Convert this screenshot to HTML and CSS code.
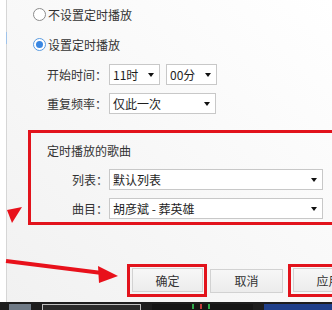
FILE: index.html
```html
<!DOCTYPE html>
<html lang="zh-CN">
<head>
    <meta charset="UTF-8">
    <title>定时播放设置</title>
    <link rel="stylesheet" href="styles.css">
</head>
<body>
    <div class="screen">
        <div class="dialog">
            <div class="side-mark"></div>

            <!-- Radio options -->
            <div class="radio-row">
                <span class="radio"></span>
                <span>不设置定时播放</span>
            </div>
            <div class="radio-row second">
                <span class="radio checked"></span>
                <span>设置定时播放</span>
            </div>

            <!-- Time settings -->
            <div class="field-row first">
                <span class="field-label">开始时间：</span>
                <div class="select short">11时<i class="caret"></i></div>
                <div class="select short">00分<i class="caret"></i></div>
            </div>
            <div class="field-row">
                <span class="field-label">重复频率：</span>
                <div class="select medium">仅此一次<i class="caret"></i></div>
            </div>

            <!-- Song box -->
            <div class="song-box">
                <div class="song-title">定时播放的歌曲</div>
                <div class="song-row">
                    <span class="song-label">列表：</span>
                    <div class="select wide">默认列表<i class="caret"></i></div>
                </div>
                <div class="song-row">
                    <span class="song-label">曲目：</span>
                    <div class="select wide">胡彦斌 - 葬英雄<i class="caret"></i></div>
                </div>
            </div>

            <!-- Buttons -->
            <div class="btn-row">
                <div class="mark-frame">
                    <button class="btn">确定</button>
                </div>
                <button class="btn cancel">取消</button>
                <div class="mark-frame apply">
                    <button class="btn">应用</button>
                </div>
            </div>
        </div>

        <div class="taskbar">
            <span class="task-icon"></span>
            <span class="task-item light"></span>
            <span class="task-item dots">
                <i class="dot green"></i><i class="dot red"></i><i class="dot green"></i>
            </span>
            <span class="task-item blue"></span>
        </div>

        <!-- Red annotation arrows -->
        <svg class="arrows" width="332" height="310" viewBox="0 0 332 310">
            <polygon points="7,210 22,207 12,223" fill="#e8111b"/>
            <line x1="6" y1="261" x2="102" y2="273" stroke="#e8111b" stroke-width="4"/>
            <polygon points="98,266 118,276 99,283" fill="#e8111b"/>
        </svg>
    </div>
</body>
</html>
```

FILE: styles.css
```css
body {
    margin: 0;
    padding: 0;
    background: #fff;
    font-family: "Noto Sans CJK SC", "Noto Sans", sans-serif;
    font-size: 12px;
    color: #333;
}

.screen {
    position: relative;
    width: 332px;
    height: 310px;
    overflow: hidden;
    background: #fff;
}

.dialog {
    position: relative;
    height: 302px;
    margin-left: 6px;
    border-left: 1px solid #d6d6d6;
    background: linear-gradient(to bottom left, #ffffff 0%, #f9f9f9 45%, #f1f1f1 100%);
    display: flex;
    flex-direction: column;
    align-items: flex-start;
}

.side-mark {
    position: absolute;
    left: -1px;
    top: 32px;
    width: 1px;
    height: 12px;
    background: #9fc3ea;
}

/* Radio options */
.radio-row {
    display: flex;
    align-items: center;
    gap: 2px;
    height: 20px;
    margin-top: 4px;
    padding-left: 26px;
}

.radio-row.second {
    margin-top: 10px;
}

.radio {
    width: 11px;
    height: 11px;
    border: 1px solid #8c8c8c;
    border-radius: 50%;
    background: #fff;
    position: relative;
}

.radio.checked {
    border-color: #5a9be0;
}

.radio.checked::after {
    content: "";
    position: absolute;
    left: 2px;
    top: 2px;
    width: 7px;
    height: 7px;
    border-radius: 50%;
    background: #3a87e2;
}

/* Time settings */
.field-row {
    display: flex;
    align-items: center;
    gap: 6px;
    margin-top: 8px;
    padding-left: 40px;
}

.field-row.first {
    margin-top: 10px;
}

.field-label {
    width: 62px;
    margin-right: -6px;
}

.select {
    position: relative;
    flex-shrink: 0;
    box-sizing: border-box;
    height: 21px;
    line-height: 19px;
    padding-left: 3px;
    border: 1px solid #c8c8c8;
    background: #fff;
    color: #1e1e1e;
}

.select.short {
    width: 51px;
}

.select.medium {
    width: 107px;
}

.select.wide {
    width: 214px;
}

.caret {
    position: absolute;
    right: 5px;
    top: 8px;
    width: 0;
    height: 0;
    border-left: 3px solid transparent;
    border-right: 3px solid transparent;
    border-top: 4px solid #111;
}

/* Song box */
.song-box {
    flex-shrink: 0;
    margin-top: 16px;
    margin-left: 21px;
    width: 320px;
    min-width: 320px;
    border: 3px solid #e2131c;
    padding: 9px 0 3px 16px;
}

.song-title {
    height: 18px;
    line-height: 18px;
}

.song-row {
    display: flex;
    align-items: center;
    margin-top: 9px;
}

.song-row + .song-row {
    margin-top: 8px;
}

.song-label {
    width: 61px;
    text-align: right;
    margin-right: 1px;
}

/* Buttons */
.btn-row {
    display: flex;
    align-items: center;
    margin-top: 39px;
    padding-left: 120px;
}

.mark-frame {
    flex-shrink: 0;
    border: 3px solid #e2131c;
    padding: 1px 1px 2px 2px;
    display: flex;
}

.mark-frame.apply {
    margin-left: 5px;
    padding-right: 20px;
}

.btn {
    flex-shrink: 0;
    width: 71px;
    height: 24px;
    padding: 0;
    border: 1px solid #d2d2d2;
    background: linear-gradient(#f7f7f7, #ececec);
    font-family: "Noto Sans CJK SC", "Noto Sans", sans-serif;
    font-size: 12px;
    color: #333;
}

.btn.cancel {
    width: 73px;
    margin-left: 3px;
}

/* Taskbar */
.taskbar {
    height: 8px;
    background: #1d1d1d;
    display: flex;
    align-items: flex-end;
    padding-left: 9px;
}

.task-icon {
    width: 23px;
    height: 6px;
    background: #6f7a86;
}

.task-item {
    height: 6px;
    margin-left: 11px;
}

.task-item.light {
    width: 101px;
    border: 1px solid #bfbfbf;
    border-bottom: none;
    box-sizing: border-box;
    background: #2a2a2a;
}

.task-item.dots {
    width: 103px;
    background: #151515;
    display: flex;
    gap: 6px;
    padding-left: 40px;
    box-sizing: border-box;
}

.dot {
    width: 2px;
    height: 5px;
}

.dot.green {
    background: #2fa84a;
}

.dot.red {
    background: #c23b3b;
}

.task-item.blue {
    width: 70px;
    background: #1f3f8a;
}

/* Annotations */
.arrows {
    position: absolute;
    left: 0;
    top: 0;
    pointer-events: none;
}
```
